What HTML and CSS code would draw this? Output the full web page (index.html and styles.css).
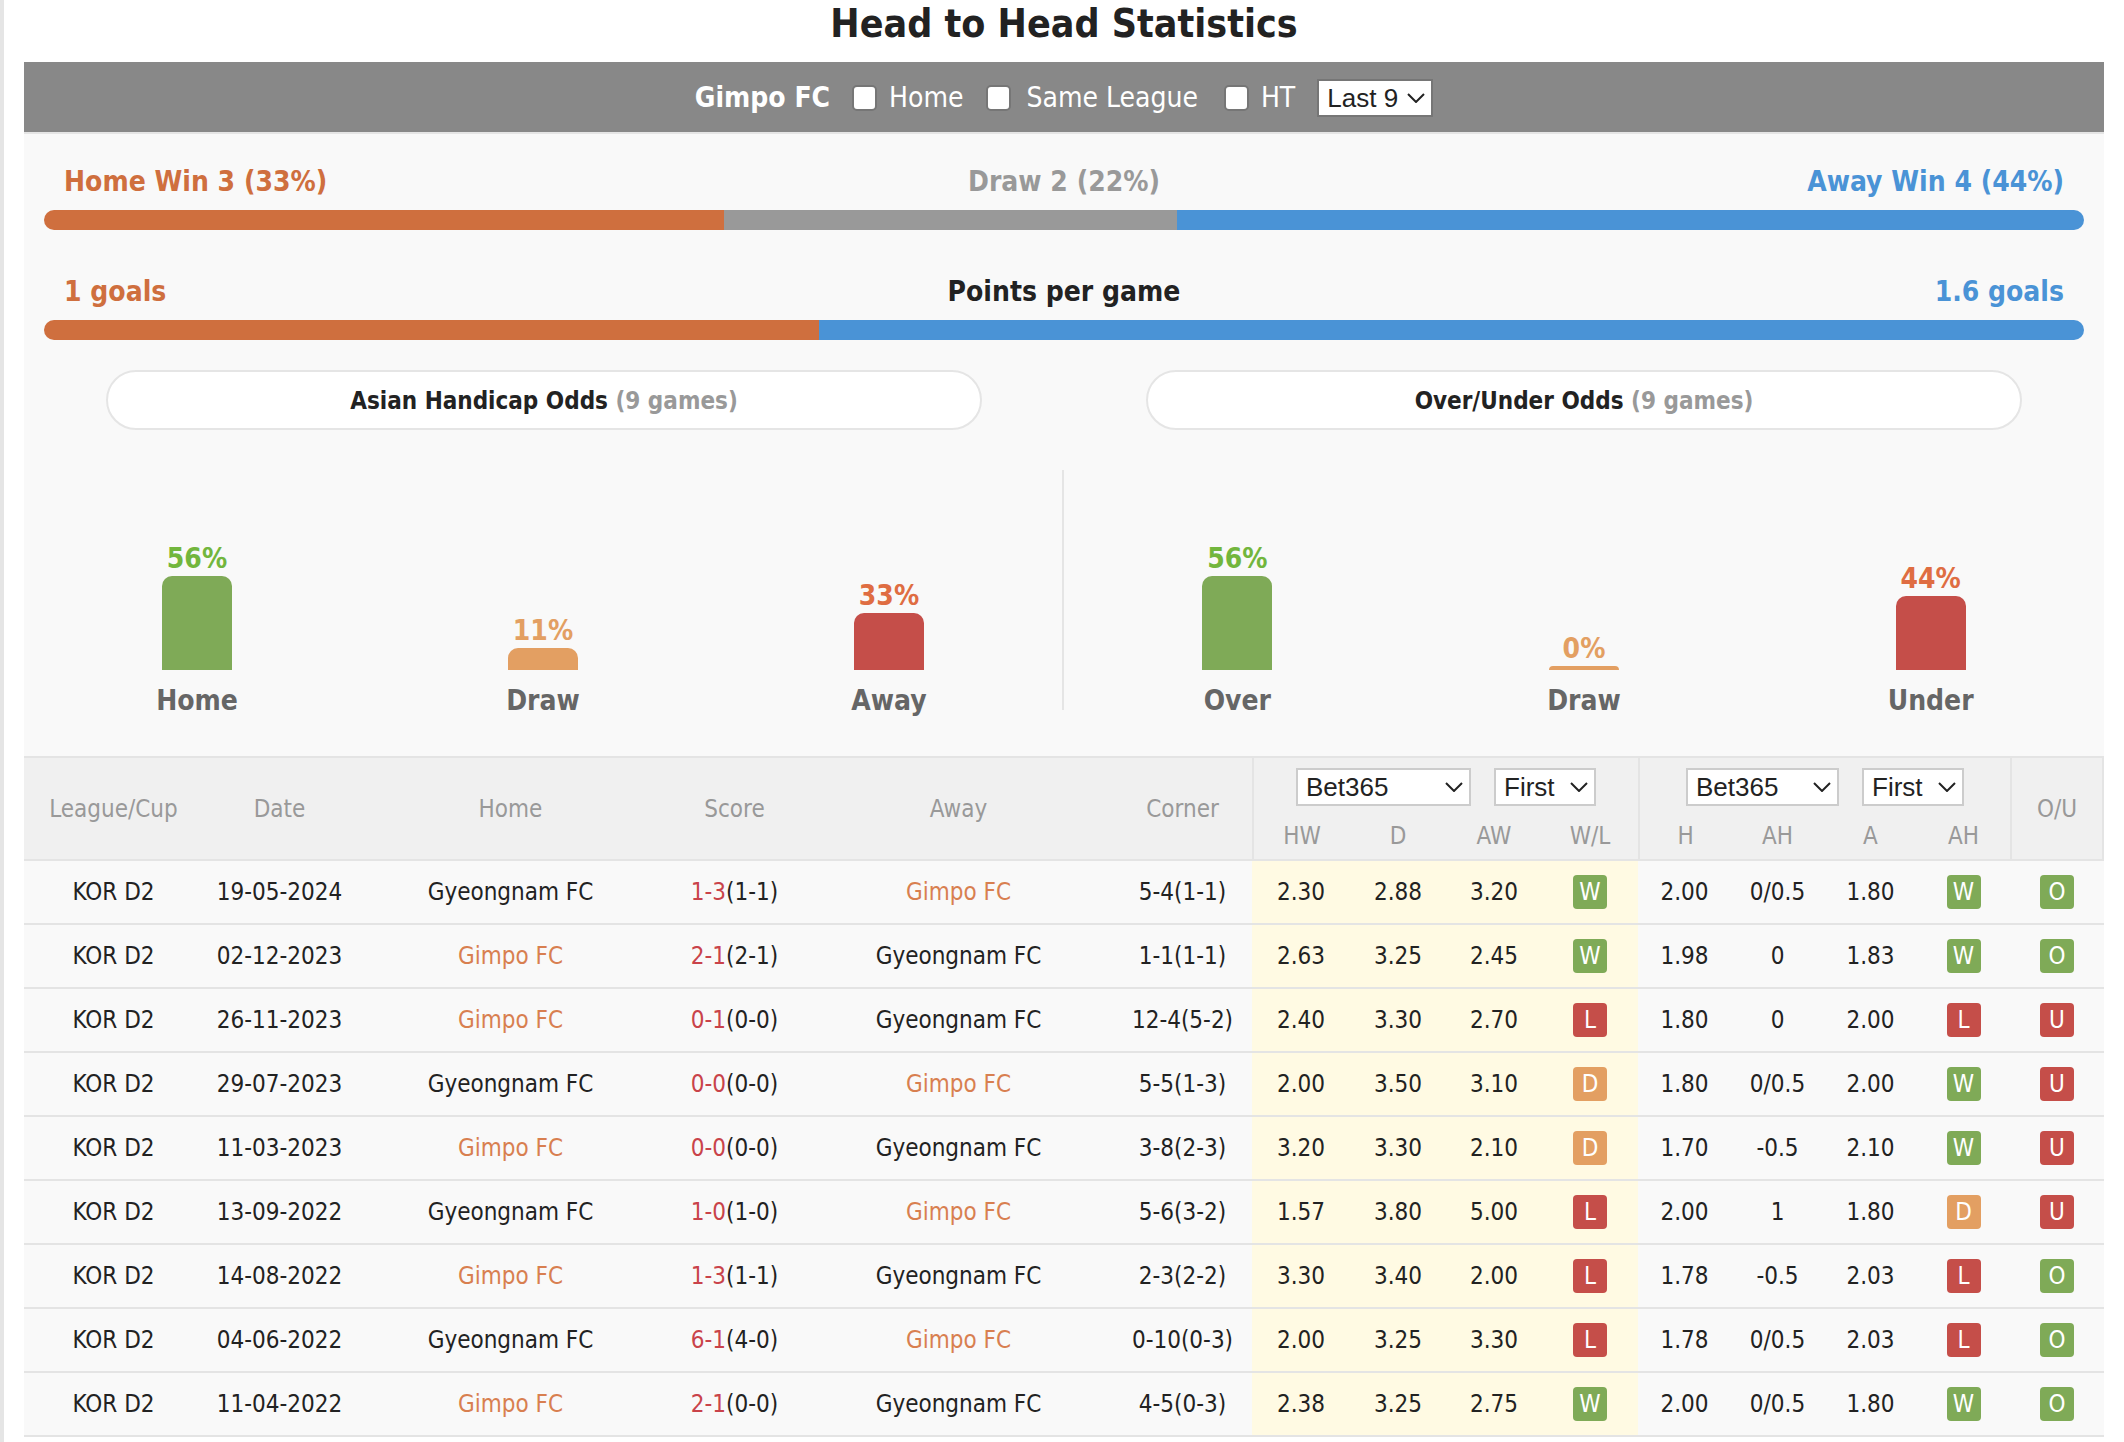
FILE: index.html
```html
<!DOCTYPE html>
<html lang="en">
<head>
<meta charset="utf-8">
<title>Head to Head Statistics</title>
<link rel="stylesheet" href="styles.css">
</head>
<body>
<main class="page">
<h1 class="title">Head to Head Statistics</h1>
<section class="panel">
  <form class="toolbar">
    <strong>Gimpo FC</strong>
    <label class="check"><input type="checkbox" name="home">Home</label>
    <label class="check check-wide"><input type="checkbox" name="league">Same League</label>
    <label class="check"><input type="checkbox" name="ht">HT</label>
    <span class="select select-count">
      <select name="count" aria-label="Number of games"><option>Last 9</option><option>Last 20</option></select>
      <svg viewBox="0 0 18 10" aria-hidden="true"><path d="M1 1l8 8 8-8"/></svg>
    </span>
  </form>

  <div class="split">
    <div class="split-labels"><span class="home">Home Win 3 (33%)</span><span class="draw">Draw 2 (22%)</span><span class="away">Away Win 4 (44%)</span></div>
    <div class="split-bar"><i class="fill-home" style="flex-grow:3"></i><i class="fill-draw" style="flex-grow:2"></i><i class="fill-away" style="flex-grow:4"></i></div>
  </div>
  <div class="split">
    <div class="split-labels"><span class="home">1 goals</span><span>Points per game</span><span class="away">1.6 goals</span></div>
    <div class="split-bar"><i class="fill-home" style="flex-grow:38"></i><i class="fill-away" style="flex-grow:62"></i></div>
  </div>

  <div class="odds">
    <h2 class="pill">Asian Handicap Odds <span>(9 games)</span></h2>
    <h2 class="pill">Over/Under Odds <span>(9 games)</span></h2>
  </div>
  <div class="charts">
    <div class="chart">
      <div class="column win"><b>56%</b><i style="height:94px"></i><span>Home</span></div>
      <div class="column push"><b>11%</b><i style="height:22px"></i><span>Draw</span></div>
      <div class="column loss"><b>33%</b><i style="height:57px"></i><span>Away</span></div>
    </div>
    <div class="chart">
      <div class="column win"><b>56%</b><i style="height:94px"></i><span>Over</span></div>
      <div class="column push"><b>0%</b><i style="height:4px"></i><span>Draw</span></div>
      <div class="column loss"><b>44%</b><i style="height:74px"></i><span>Under</span></div>
    </div>
  </div>

  <table class="games">
    <colgroup>
      <col class="c-league"><col class="c-date"><col class="c-team"><col class="c-score"><col class="c-team"><col class="c-score">
      <col class="c-first"><col class="c-result" span="3"><col class="c-handicap" span="4"><col class="c-total">
    </colgroup>
    <thead>
      <tr>
        <th rowspan="2">League/Cup</th><th rowspan="2">Date</th><th rowspan="2">Home</th><th rowspan="2">Score</th><th rowspan="2">Away</th><th rowspan="2">Corner</th>
        <th colspan="4" class="group edge"><div class="pickers">
          <span class="select select-book"><select aria-label="1X2 bookmaker"><option>Bet365</option></select><svg viewBox="0 0 18 10" aria-hidden="true"><path d="M1 1l8 8 8-8"/></svg></span>
          <span class="select select-time"><select aria-label="1X2 odds time"><option>First</option></select><svg viewBox="0 0 18 10" aria-hidden="true"><path d="M1 1l8 8 8-8"/></svg></span>
        </div></th>
        <th colspan="4" class="group edge"><div class="pickers">
          <span class="select select-book-small"><select aria-label="Handicap bookmaker"><option>Bet365</option></select><svg viewBox="0 0 18 10" aria-hidden="true"><path d="M1 1l8 8 8-8"/></svg></span>
          <span class="select select-time"><select aria-label="Handicap odds time"><option>First</option></select><svg viewBox="0 0 18 10" aria-hidden="true"><path d="M1 1l8 8 8-8"/></svg></span>
        </div></th>
        <th rowspan="2" class="edge edge-right">O/U</th>
      </tr>
      <tr class="sub"><th class="edge">HW</th><th>D</th><th>AW</th><th>W/L</th><th class="edge">H</th><th>AH</th><th>A</th><th>AH</th></tr>
    </thead>
    <tbody>
      <tr><td>KOR D2</td><td>19-05-2024</td><td>Gyeongnam FC</td><td><em>1-3</em>(1-1)</td><td class="team">Gimpo FC</td><td>5-4(1-1)</td><td class="hl">2.30</td><td class="hl">2.88</td><td class="hl">3.20</td><td class="hl"><span class="tag green">W</span></td><td>2.00</td><td>0/0.5</td><td>1.80</td><td><span class="tag green">W</span></td><td><span class="tag green">O</span></td></tr>
      <tr><td>KOR D2</td><td>02-12-2023</td><td class="team">Gimpo FC</td><td><em>2-1</em>(2-1)</td><td>Gyeongnam FC</td><td>1-1(1-1)</td><td class="hl">2.63</td><td class="hl">3.25</td><td class="hl">2.45</td><td class="hl"><span class="tag green">W</span></td><td>1.98</td><td>0</td><td>1.83</td><td><span class="tag green">W</span></td><td><span class="tag green">O</span></td></tr>
      <tr><td>KOR D2</td><td>26-11-2023</td><td class="team">Gimpo FC</td><td><em>0-1</em>(0-0)</td><td>Gyeongnam FC</td><td>12-4(5-2)</td><td class="hl">2.40</td><td class="hl">3.30</td><td class="hl">2.70</td><td class="hl"><span class="tag red">L</span></td><td>1.80</td><td>0</td><td>2.00</td><td><span class="tag red">L</span></td><td><span class="tag red">U</span></td></tr>
      <tr><td>KOR D2</td><td>29-07-2023</td><td>Gyeongnam FC</td><td><em>0-0</em>(0-0)</td><td class="team">Gimpo FC</td><td>5-5(1-3)</td><td class="hl">2.00</td><td class="hl">3.50</td><td class="hl">3.10</td><td class="hl"><span class="tag amber">D</span></td><td>1.80</td><td>0/0.5</td><td>2.00</td><td><span class="tag green">W</span></td><td><span class="tag red">U</span></td></tr>
      <tr><td>KOR D2</td><td>11-03-2023</td><td class="team">Gimpo FC</td><td><em>0-0</em>(0-0)</td><td>Gyeongnam FC</td><td>3-8(2-3)</td><td class="hl">3.20</td><td class="hl">3.30</td><td class="hl">2.10</td><td class="hl"><span class="tag amber">D</span></td><td>1.70</td><td>-0.5</td><td>2.10</td><td><span class="tag green">W</span></td><td><span class="tag red">U</span></td></tr>
      <tr><td>KOR D2</td><td>13-09-2022</td><td>Gyeongnam FC</td><td><em>1-0</em>(1-0)</td><td class="team">Gimpo FC</td><td>5-6(3-2)</td><td class="hl">1.57</td><td class="hl">3.80</td><td class="hl">5.00</td><td class="hl"><span class="tag red">L</span></td><td>2.00</td><td>1</td><td>1.80</td><td><span class="tag amber">D</span></td><td><span class="tag red">U</span></td></tr>
      <tr><td>KOR D2</td><td>14-08-2022</td><td class="team">Gimpo FC</td><td><em>1-3</em>(1-1)</td><td>Gyeongnam FC</td><td>2-3(2-2)</td><td class="hl">3.30</td><td class="hl">3.40</td><td class="hl">2.00</td><td class="hl"><span class="tag red">L</span></td><td>1.78</td><td>-0.5</td><td>2.03</td><td><span class="tag red">L</span></td><td><span class="tag green">O</span></td></tr>
      <tr><td>KOR D2</td><td>04-06-2022</td><td>Gyeongnam FC</td><td><em>6-1</em>(4-0)</td><td class="team">Gimpo FC</td><td>0-10(0-3)</td><td class="hl">2.00</td><td class="hl">3.25</td><td class="hl">3.30</td><td class="hl"><span class="tag red">L</span></td><td>1.78</td><td>0/0.5</td><td>2.03</td><td><span class="tag red">L</span></td><td><span class="tag green">O</span></td></tr>
      <tr><td>KOR D2</td><td>11-04-2022</td><td class="team">Gimpo FC</td><td><em>2-1</em>(0-0)</td><td>Gyeongnam FC</td><td>4-5(0-3)</td><td class="hl">2.38</td><td class="hl">3.25</td><td class="hl">2.75</td><td class="hl"><span class="tag green">W</span></td><td>2.00</td><td>0/0.5</td><td>1.80</td><td><span class="tag green">W</span></td><td><span class="tag green">O</span></td></tr>
    </tbody>
  </table>
</section>
</main>
</body>
</html>
```
FILE: styles.css
```css
* { box-sizing: border-box; }

body {
  margin: 0;
  background: #fff;
  color: #222;
  font: 24px/34px Tahoma, "DejaVu Sans Condensed", "Noto Sans", sans-serif;
}

.page {
  min-height: 100vh;
  padding: 0 20px;
  border-left: 4px solid #e5e5e5;
}

.title {
  margin: 0;
  padding-bottom: 14px;
  font-size: 39px;
  line-height: 48px;
  text-align: center;
}

.panel { background: #f9f9f9; }

/* filter bar */
.toolbar {
  display: flex;
  align-items: center;
  justify-content: center;
  gap: 22px;
  height: 72px;
  padding-top: 2px;
  border-bottom: 2px solid #e5e5e5;
  background: #888;
  color: #fff;
  font-size: 28px;
}

.check {
  display: flex;
  align-items: center;
  gap: 12px;
}

.check-wide {
  gap: 16px;
  padding-right: 4px;
}

.check input {
  appearance: none;
  width: 25px;
  height: 26px;
  margin: 0;
  border: 2px solid #767676;
  border-radius: 5px;
  background: #fff;
}

.check input:checked { background: #4a93d6; }

/* drop-downs with their own arrow */
.select {
  display: inline-grid;
  align-items: center;
}

.select select,
.select svg { grid-area: 1 / 1; }

.select select {
  appearance: none;
  width: 100%;
  height: 38px;
  margin: 0;
  padding: 0 8px;
  border: 2px solid #ccc;
  border-radius: 0;
  background: #fff;
  color: #222;
  font: 26px/34px Arial, "Liberation Sans", sans-serif;
}

.select svg {
  justify-self: end;
  width: 18px;
  height: 10px;
  margin-right: 8px;
  fill: none;
  stroke: #222;
  stroke-width: 2;
  pointer-events: none;
}

.select-count { width: 116px; }
.select-count select { border-color: #767676; }
.select-book { width: 175px; }
.select-book-small { width: 153px; }
.select-time { width: 102px; }

/* proportion bars */
.split { padding: 31px 20px 0; }
.split + .split { padding-top: 45px; }

.split-labels {
  display: grid;
  grid-template-columns: 1fr 1fr 1fr;
  padding: 0 20px 11px;
  font-size: 28px;
  font-weight: bold;
  text-align: center;
}

.split-labels :first-child { text-align: left; }
.split-labels :last-child { text-align: right; }

.home { color: #cf6f3e; }
.draw { color: #999; }
.away { color: #4a93d6; }

.split-bar {
  display: flex;
  height: 20px;
  overflow: hidden;
  border-radius: 10px;
}

.fill-home { background: #cf6f3e; }
.fill-draw { background: #999; }
.fill-away { background: #4a93d6; }

/* odds headings */
.odds {
  display: grid;
  grid-template-columns: 1fr 1fr;
  padding-top: 30px;
}

.pill {
  margin: 0 82px;
  padding: 12px 0 10px;
  border: 2px solid #e5e5e5;
  border-radius: 30px;
  background: #fff;
  font-size: 24px;
  line-height: 34px;
  text-align: center;
}

.pill span { color: #999; }

/* column charts */
.charts {
  display: grid;
  grid-template-columns: 1fr 1fr;
  padding: 40px 0 46px;
}

.chart {
  display: grid;
  grid-template-columns: 1fr 1fr 1fr;
  height: 240px;
}

.chart:first-child { border-right: 2px solid #e5e5e5; }

.column {
  display: flex;
  flex-direction: column;
  align-items: center;
  justify-content: flex-end;
  font-size: 28px;
  font-weight: bold;
}

.column i {
  width: 70px;
  margin-bottom: 14px;
  border-radius: 10px 10px 0 0;
}

.column span {
  margin-bottom: -8px;
  color: #666;
}

.win { color: #72b63d; }
.win i { background: #7faa57; }
.push { color: #e39f62; }
.push i { background: #e39f62; }
.loss { color: #df6d42; }
.loss i { background: #c54e49; }

/* games table */
.games {
  width: 100%;
  border-spacing: 0;
  table-layout: fixed;
  text-align: center;
}

.c-league { width: 179px; }
.c-date { width: 153px; }
.c-team { width: 309px; }
.c-score { width: 139px; }
.c-first { width: 98px; }
.c-result { width: 96px; }
.c-handicap { width: 93px; }
.c-total { width: 94px; }

.games th {
  padding: 0;
  border: 0 solid #e4e4e4;
  background: #f0f0f0;
  color: #999;
  font-weight: normal;
}

.games thead tr:first-child th { border-top-width: 2px; }
.games th[rowspan],
.games .sub th { border-bottom-width: 2px; }
.games .edge { border-left-width: 2px; }
.games .edge-right { border-right-width: 2px; }
.games .sub th { height: 49px; }
.games .group { height: 56px; }

.pickers {
  display: flex;
  justify-content: center;
  gap: 23px;
  padding: 10px 0 6px;
}

.games td {
  height: 64px;
  padding: 0;
  border-bottom: 2px solid #e4e4e4;
}

.games .hl { background: #fffae3; }
.games em { color: #c9434a; font-style: normal; }
.games .team { color: #d87f50; }

.tag {
  display: block;
  width: 34px;
  margin: 0 auto;
  border-radius: 4px;
  color: #fff;
}

.green { background: #7faa57; }
.red { background: #c54e49; }
.amber { background: #e39f62; }
```
